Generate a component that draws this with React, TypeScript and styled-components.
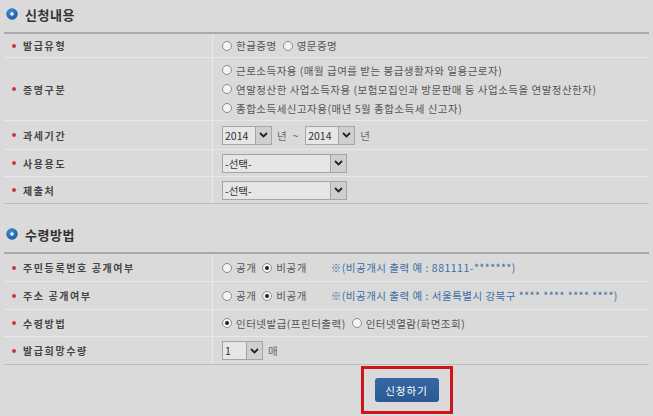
import React from "react";
import styled, { createGlobalStyle } from "styled-components";

const GlobalStyle = createGlobalStyle`
  html, body {
    margin: 0;
    padding: 0;
    background: #dadada;
  }
  body {
    font-family: "Noto Sans CJK KR", "Noto Sans", sans-serif;
    color: #333;
  }
`;

const S = {
  Page: styled.div`
    width: 653px;
    height: 416px;
    overflow: hidden;
    background: #dadada;
    padding: 0 4px 0 4px;
    box-sizing: border-box;
  `,
  SectionTitle: styled.h2<{ $top: number }>`
    display: flex;
    align-items: center;
    gap: 7px;
    margin: ${(p) => p.$top}px 0 0 2px;
    height: 22px;
    font-size: 13px;
    font-weight: 700;
    color: #333;
    letter-spacing: 0.5px;
  `,
  Table: styled.div<{ $gap: number }>`
    margin-top: ${(p) => p.$gap}px;
    border-top: 2px solid #a9a9a9;
    border-bottom: 1px solid #bdbdbd;
  `,
  Row: styled.div<{ $h: number }>`
    display: grid;
    grid-template-columns: 209px 1fr;
    height: ${(p) => p.$h}px;
    & + & {
      border-top: 1px solid #e8e8e8;
    }
  `,
  Label: styled.div`
    display: flex;
    align-items: center;
    padding-left: 8px;
    border-right: 1px solid #e8e8e8;
    font-size: 10px;
    font-weight: 700;
    letter-spacing: 1.6px;
    color: #444;
    &::before {
      content: "";
      width: 4px;
      height: 4px;
      border-radius: 50%;
      background: #c9383f;
      margin-right: 7px;
    }
  `,
  Value: styled.div<{ $col?: boolean }>`
    display: flex;
    flex-direction: ${(p) => (p.$col ? "column" : "row")};
    justify-content: ${(p) => (p.$col ? "center" : "flex-start")};
    align-items: ${(p) => (p.$col ? "flex-start" : "center")};
    gap: ${(p) => (p.$col ? "4px" : "0")};
    padding-left: 9px;
    font-size: 10.5px;
    letter-spacing: 0.5px;
    color: #555;
  `,
  Option: styled.span`
    display: inline-flex;
    align-items: center;
    margin-right: 6px;
    white-space: nowrap;
  `,
  Radio: styled.span<{ $on?: boolean }>`
    width: 10px;
    height: 10px;
    border-radius: 50%;
    border: 1px solid #8d8d8d;
    background: #f4f4f4;
    box-sizing: border-box;
    margin-right: 4px;
    display: inline-flex;
    align-items: center;
    justify-content: center;
    &::after {
      content: "";
      width: 4px;
      height: 4px;
      border-radius: 50%;
      background: ${(p) => (p.$on ? "#222" : "transparent")};
    }
  `,
  Note: styled.span`
    color: #3a6ea5;
    margin-left: 18px;
    white-space: nowrap;
  `,
  Select: styled.div<{ $w: number }>`
    width: ${(p) => p.$w}px;
    height: 19px;
    box-sizing: border-box;
    border: 1px solid #a5a5a5;
    background: #e6e6e6;
    display: flex;
    align-items: center;
    justify-content: space-between;
    font-size: 10.5px;
    letter-spacing: 0;
    color: #333;
    padding-left: 2px;
  `,
  Arrow: styled.span`
    width: 16px;
    height: 17px;
    box-sizing: border-box;
    border-left: 1px solid #a5a5a5;
    background: #cfcfcf;
    display: flex;
    align-items: center;
    justify-content: center;
  `,
  Unit: styled.span`
    margin: 0 6px 0 5px;
    color: #666;
  `,
  Footer: styled.div`
    display: flex;
    justify-content: center;
    padding-top: 1px;
    padding-left: 160px;
  `,
  Highlight: styled.div`
    border: 3px solid #d0141b;
    padding: 11px 11px;
    width: 92px;
    height: 48px;
    box-sizing: border-box;
    display: flex;
    align-items: center;
    justify-content: center;
  `,
  Button: styled.button`
    width: 66px;
    height: 24px;
    border: none;
    border-radius: 3px;
    background: linear-gradient(#3567a3, #2b5a92);
    color: #fff;
    font-family: "Noto Sans CJK KR", sans-serif;
    font-size: 10.5px;
    letter-spacing: 1px;
    padding: 0;
  `,
};

const Bullet = () => (
  <svg width="12" height="12" viewBox="0 0 12 12">
    <defs>
      <radialGradient id="bg" cx="40%" cy="35%" r="70%">
        <stop offset="0%" stopColor="#3f8fd6" />
        <stop offset="100%" stopColor="#1b5a99" />
      </radialGradient>
    </defs>
    <circle cx="6" cy="6" r="5.7" fill="url(#bg)" />
    <circle cx="6" cy="6" r="1.8" fill="#e8f1fa" />
  </svg>
);

const Chevron = () => (
  <svg width="9" height="6" viewBox="0 0 9 6">
    <path d="M1 1 L4.5 4.5 L8 1" fill="none" stroke="#222" strokeWidth="1.8" />
  </svg>
);

const Select = ({ w, text }: { w: number; text: string }) => (
  <S.Select $w={w}>
    <span>{text}</span>
    <S.Arrow>
      <Chevron />
    </S.Arrow>
  </S.Select>
);

const Opt = ({ on, children }: { on?: boolean; children: React.ReactNode }) => (
  <S.Option>
    <S.Radio $on={on} />
    {children}
  </S.Option>
);

export default function App() {
  return (
    <S.Page>
      <GlobalStyle />
      <S.SectionTitle $top={3}>
        <Bullet />
        신청내용
      </S.SectionTitle>
      <S.Table $gap={7}>
        <S.Row $h={23}>
          <S.Label>발급유형</S.Label>
          <S.Value>
            <Opt>한글증명</Opt>
            <Opt>영문증명</Opt>
          </S.Value>
        </S.Row>
        <S.Row $h={62}>
          <S.Label>증명구분</S.Label>
          <S.Value $col>
            <Opt>근로소득자용 (매월 급여를 받는 봉급생활자와 일용근로자)</Opt>
            <Opt>연말정산한 사업소득자용 (보험모집인과 방문판매 등 사업소득을 연말정산한자)</Opt>
            <Opt>종합소득세신고자용(매년 5월 종합소득세 신고자)</Opt>
          </S.Value>
        </S.Row>
        <S.Row $h={28}>
          <S.Label>과세기간</S.Label>
          <S.Value>
            <Select w={50} text="2014" />
            <S.Unit>년 &nbsp;~</S.Unit>
            <Select w={50} text="2014" />
            <S.Unit>년</S.Unit>
          </S.Value>
        </S.Row>
        <S.Row $h={26}>
          <S.Label>사용용도</S.Label>
          <S.Value>
            <Select w={125} text="-선택-" />
          </S.Value>
        </S.Row>
        <S.Row $h={26}>
          <S.Label>제출처</S.Label>
          <S.Value>
            <Select w={125} text="-선택-" />
          </S.Value>
        </S.Row>
      </S.Table>

      <S.SectionTitle $top={19}>
        <Bullet />
        수령방법
      </S.SectionTitle>
      <S.Table $gap={7}>
        <S.Row $h={27}>
          <S.Label>주민등록번호 공개여부</S.Label>
          <S.Value>
            <Opt>공개</Opt>
            <Opt on>비공개</Opt>
            <S.Note>※(비공개시 출력 예 : 881111-*******)</S.Note>
          </S.Value>
        </S.Row>
        <S.Row $h={27}>
          <S.Label>주소 공개여부</S.Label>
          <S.Value>
            <Opt>공개</Opt>
            <Opt on>비공개</Opt>
            <S.Note>※(비공개시 출력 예 : 서울특별시 강북구 **** **** **** ****)</S.Note>
          </S.Value>
        </S.Row>
        <S.Row $h={26}>
          <S.Label>수령방법</S.Label>
          <S.Value>
            <Opt on>인터넷발급(프린터출력)</Opt>
            <Opt>인터넷열람(화면조회)</Opt>
          </S.Value>
        </S.Row>
        <S.Row $h={27}>
          <S.Label>발급희망수량</S.Label>
          <S.Value>
            <Select w={41} text="1" />
            <S.Unit>매</S.Unit>
          </S.Value>
        </S.Row>
      </S.Table>

      <S.Footer>
        <S.Highlight>
          <S.Button>신청하기</S.Button>
        </S.Highlight>
      </S.Footer>
    </S.Page>
  );
}
